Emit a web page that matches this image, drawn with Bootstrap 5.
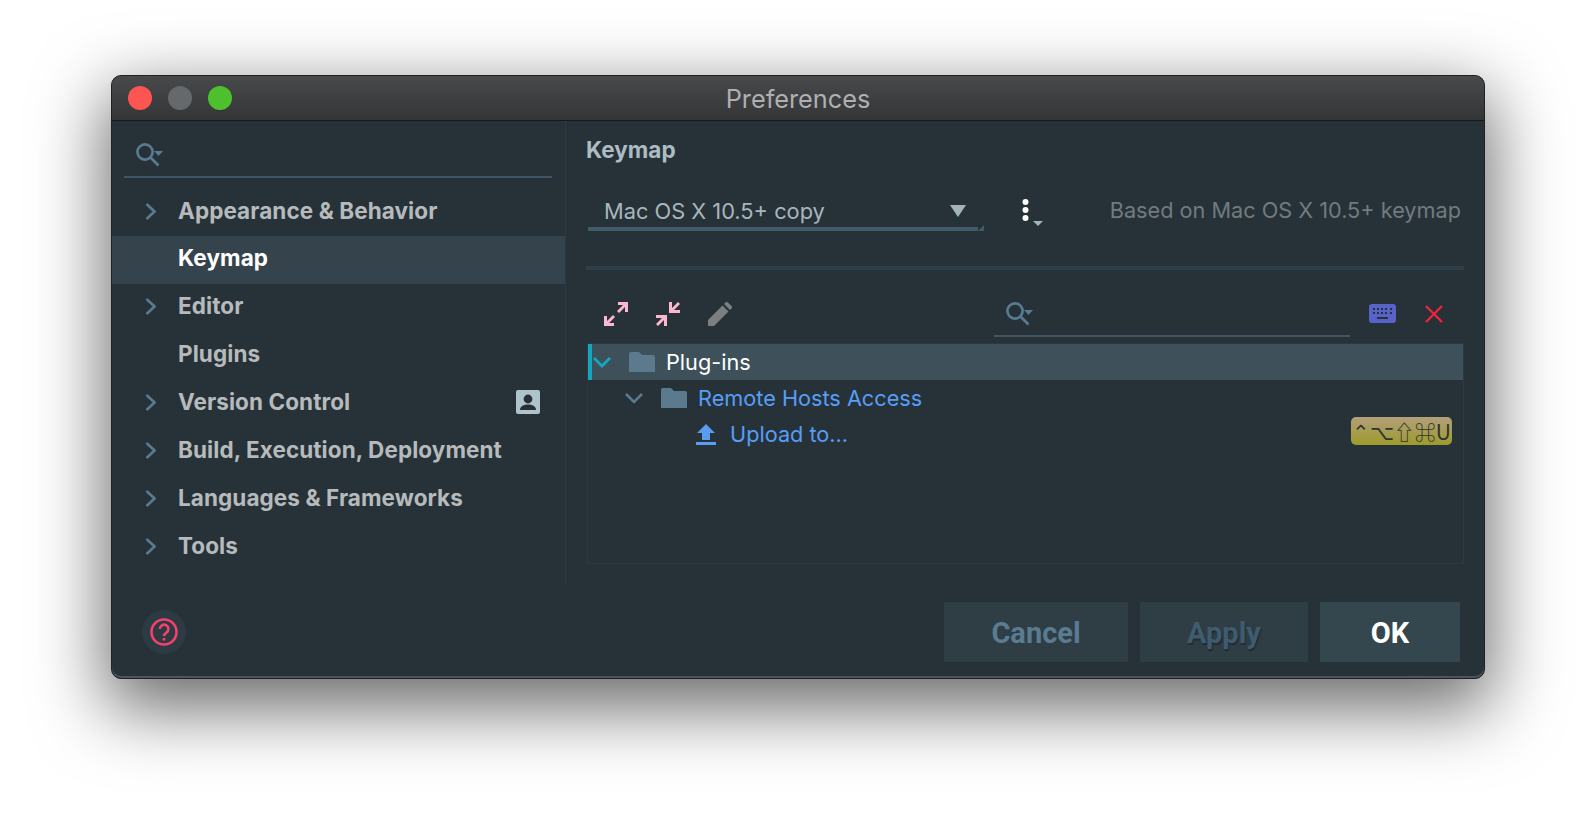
<!DOCTYPE html>
<html lang="en">
<head>
    <meta charset="UTF-8">
    <meta name="viewport" content="width=device-width, initial-scale=1.0">
    <title>Preferences</title>
    <link rel="stylesheet" href="https://cdn.jsdelivr.net/npm/bootstrap@5.3.0/dist/css/bootstrap.min.css">
    <style>
        body { background: #fff; font-family: Inter, "Liberation Sans", sans-serif; overflow: hidden; height: 826px; padding: 75px 0 0 111px; }
        svg { display: block; flex: none; }

        .pref-window { width: 1374px; height: 604px; background: #263238; border-radius: 10px; border: 1px solid #1e2224; box-shadow: inset 0 -2px 0 #4a565c, 0 24px 70px 6px rgba(0,0,0,.58); overflow: hidden; }
        .pref-title { height: 45px; display: grid; grid-template-columns: 1fr auto 1fr; align-items: center; padding: 2px 16px 0; background: linear-gradient(#47494b, #333537); border-bottom: 1px solid #17191a; color: #aeb0b1; font-size: 25.3px; line-height: 1; }
        .pref-lights { gap: 16px; margin-top: -2px; }
        .pref-light { width: 24px; height: 24px; border-radius: 50%; }
        .pref-red { background: #fd5552; }
        .pref-grey { background: #65696b; }
        .pref-green { background: #4ec02d; }

        .pref-side { width: 454px; height: 463px; border-right: 1px solid #2c3943; }
        .pref-search { margin: 0 13px 0 12px; height: 57px; border-bottom: 2px solid #3f5565; padding: 22px 0 0 12px; }
        .pref-nav { margin-top: 11px; background: transparent; border-radius: 0; }
        .pref-nav .list-group-item { height: 48px; padding: 0 25px 4px 33px; background: transparent; border: 0; color: #b6babc; font-size: 22.5px; font-weight: 700; letter-spacing: .08px; gap: 22px; }
        .pref-nav .list-group-item.active { background: #35444c; color: #fff; }
        .pref-gap { width: 11px; flex: none; }

        .pref-main { flex: 1; padding: 0 20px 0 20px; }
        .pref-head { color: #adbbc2; font-size: 22.5px; font-weight: 700; line-height: 58px; height: 60px; }
        .pref-scheme { height: 48px; margin-top: 6px; }
        .pref-combo { width: 390px; height: 44px; margin-left: 2px; padding: 8px 12px 0 16px; border-bottom: 4px solid #425b68; color: #a8b6bc; font-size: 21.8px; }
        .pref-combo::after { content: ""; position: absolute; right: -6px; bottom: -4px; border: 3px solid transparent; border-right-color: #425b68; border-bottom-color: #425b68; }
        .pref-kebab { margin: 9px 0 0 44px; }
        .pref-based { color: #737a7e; font-size: 21.7px; margin: 7px 3px 0 auto; }
        .pref-rule { height: 4px; background: #2f3f49; margin-top: 31px; }
        .pref-tools { height: 74px; padding: 13px 21px 0 18px; }
        .pref-next { margin-left: 28px; }
        .pref-find { width: 356px; height: 67px; margin-top: -13px; padding: 32px 0 0 12px; border-bottom: 2px solid #3f5565; align-self: flex-start; }
        .pref-kbd { margin-left: 19px; }
        .pref-close { margin-left: 29px; }
        .pref-tree { height: 221px; border: 1px solid #2c3943; margin-left: 1px; margin-top: -1px; }
        .pref-row { height: 36px; font-size: 21.7px; color: #589df6; }
        .pref-row.is-open { background: #3e515b; color: #fff; border-left: 4px solid #13a6bd; }
        .pref-arrow-a { margin-left: 1px; }
        .pref-arrow-b { margin-left: 37px; }
        .pref-folder { margin-left: 18px; }
        .pref-label { margin-left: 11px; }
        .pref-upload { margin-left: 108px; }
        .pref-label-up { margin-left: 14px; }
        .pref-keys { height: 28px; padding: 0 1px; margin: -6px 11px 0 auto; background: linear-gradient(#b39f7a, #9d9b2a); border-radius: 5px; color: #2f3336; font-family: "Noto Sans CJK JP", "DejaVu Sans", sans-serif; font-size: 21px; line-height: 28px; white-space: nowrap; }

        .pref-foot { height: 94px; padding: 18px 24px 0 0; }
        .pref-help { width: 44px; height: 44px; margin: 8px 0 0 30px; background: #2c3a43; border-radius: 50%; }
        .pref-btn { height: 60px; padding: 2px 0 0; border: 0; border-radius: 0; background: #2f3d45; font-size: 29px; line-height: 1; font-family: Roboto, sans-serif; font-weight: 700; }
        .pref-cancel { width: 184px; color: #5a7b90; }
        .pref-apply { width: 168px; margin-left: 12px; color: #3f5b70; text-shadow: 1px 2px 1px #222c32; }
        .pref-ok { width: 140px; margin-left: 12px; background: #34474e; color: #fff; }
    </style>
</head>
<body>
    <div class="pref-window d-flex flex-column">
        <div class="pref-title">
            <div class="pref-lights d-flex">
                <div class="pref-light pref-red"></div>
                <div class="pref-light pref-grey"></div>
                <div class="pref-light pref-green"></div>
            </div>
            <div>Preferences</div>
            <div></div>
        </div>

        <div class="d-flex">
            <div class="pref-side">
                <div class="pref-search">
                    <svg width="28" height="24" viewBox="0 0 28 24" fill="none" stroke="#587b90" stroke-width="2.7"><circle cx="9" cy="9" r="7.6"/><path d="M14.500 14.500l8 8"/><path d="M18 8h9l-4.500 5z" fill="#587b90" stroke="none"/></svg>
                </div>
                <div class="pref-nav list-group">
                    <div class="list-group-item d-flex align-items-center"><svg class="pref-gap" width="11" height="17" viewBox="0 0 11 17" fill="none" stroke="#587b90" stroke-width="2.6"><path d="M1.5 1l8 7.5-8 7.5"/></svg>Appearance &amp; Behavior</div>
                    <div class="list-group-item active d-flex align-items-center"><div class="pref-gap"></div>Keymap</div>
                    <div class="list-group-item d-flex align-items-center"><svg class="pref-gap" width="11" height="17" viewBox="0 0 11 17" fill="none" stroke="#587b90" stroke-width="2.6"><path d="M1.5 1l8 7.5-8 7.5"/></svg>Editor</div>
                    <div class="list-group-item d-flex align-items-center"><div class="pref-gap"></div>Plugins</div>
                    <div class="list-group-item d-flex align-items-center"><svg class="pref-gap" width="11" height="17" viewBox="0 0 11 17" fill="none" stroke="#587b90" stroke-width="2.6"><path d="M1.5 1l8 7.5-8 7.5"/></svg>Version Control
                        <svg class="ms-auto" width="24" height="24" viewBox="0 0 24 24"><rect width="24" height="24" rx="2" fill="#afc3cd"/><circle cx="12" cy="9" r="4.4" fill="#263238"/><path d="M4 20c0-4 4-5.5 8-5.5s8 1.500 8 5.500z" fill="#263238"/></svg>
                    </div>
                    <div class="list-group-item d-flex align-items-center"><svg class="pref-gap" width="11" height="17" viewBox="0 0 11 17" fill="none" stroke="#587b90" stroke-width="2.6"><path d="M1.5 1l8 7.5-8 7.5"/></svg>Build, Execution, Deployment</div>
                    <div class="list-group-item d-flex align-items-center"><svg class="pref-gap" width="11" height="17" viewBox="0 0 11 17" fill="none" stroke="#587b90" stroke-width="2.6"><path d="M1.5 1l8 7.5-8 7.5"/></svg>Languages &amp; Frameworks</div>
                    <div class="list-group-item d-flex align-items-center"><svg class="pref-gap" width="11" height="17" viewBox="0 0 11 17" fill="none" stroke="#587b90" stroke-width="2.6"><path d="M1.5 1l8 7.5-8 7.5"/></svg>Tools</div>
                </div>
            </div>

            <div class="pref-main">
                <div class="pref-head">Keymap</div>
                <div class="pref-scheme d-flex align-items-start">
                    <div class="pref-combo position-relative d-flex align-items-center justify-content-between">
                        <span>Mac OS X 10.5+ copy</span>
                        <svg width="16" height="12" viewBox="0 0 16 12"><path d="M0 0h16l-8 12z" fill="#a3b3bb"/></svg>
                    </div>
                    <svg class="pref-kebab" width="22" height="32" viewBox="0 0 22 32"><g fill="#fff"><circle cx="3.500" cy="6" r="3"/><circle cx="3.500" cy="14" r="3"/><circle cx="3.500" cy="22" r="3"/></g><path d="M11 25h10l-5 5z" fill="#a3b3bb"/></svg>
                    <div class="pref-based">Based on Mac OS X 10.5+ keymap</div>
                </div>
                <div class="pref-rule"></div>
                <div class="pref-tools d-flex align-items-center">
                    <svg width="24" height="24" viewBox="0 0 24 24" fill="#fbb8d0"><path d="M14 0h10v10h-3V5l-6 6-2-2 6-6h-5z"/><path d="M10 24H0V14h3v5l6-6 2 2-6 6h5z"/></svg>
                    <svg class="pref-next" width="24" height="24" viewBox="0 0 24 24" fill="#fbb8d0"><path d="M24 8v3H13V0h3v6l6-6 2 2-6 6z"/><path d="M0 16v-3h11v11H8v-6l-6 6-2-2 6-6z"/></svg>
                    <svg class="pref-next" width="24" height="24" viewBox="0 0 24 24" fill="#7b7f81"><path d="M0 24v-6L14.500 3.500l6 6L6 24z"/><path d="M16 2l1.500-1.500a1.700 1.700 0 0 1 2.400 0l3.600 3.600a1.700 1.700 0 0 1 0 2.400L22 8z"/></svg>
                    <div class="pref-find ms-auto">
                        <svg width="28" height="24" viewBox="0 0 28 24" fill="none" stroke="#587b90" stroke-width="2.7"><circle cx="9" cy="9" r="7.6"/><path d="M14.500 14.500l8 8"/><path d="M18 8h9l-4.500 5z" fill="#587b90" stroke="none"/></svg>
                    </div>
                    <svg class="pref-kbd" width="27" height="19" viewBox="0 0 27 19"><rect width="27" height="19" rx="3" fill="#5763c8"/><g fill="#263238"><path d="M4 4h2v2H4zM8 4h2v2H8zM12 4h2v2h-2zM16 4h2v2h-2zM21 4h2v2h-2zM4 8h2v2H4zM8 8h2v2H8zM12 8h2v2h-2zM16 8h2v2h-2zM21 8h2v2h-2zM8 13h11v2H8z"/></g></svg>
                    <svg class="pref-close" width="18" height="18" viewBox="0 0 18 18" fill="none" stroke="#f2223f" stroke-width="2.400"><path d="M1 1l16 16M17 1L1 17"/></svg>
                </div>
                <div class="pref-tree">
                    <div class="pref-row is-open d-flex align-items-center">
                        <svg class="pref-arrow-a" width="18" height="11" viewBox="0 0 18 11" fill="none" stroke="#13a6bd" stroke-width="2.800"><path d="M1 1l8 8 8-8"/></svg>
                        <svg class="pref-folder" width="26" height="20" viewBox="0 0 26 20"><path d="M0 2a2 2 0 0 1 2-2h8l3 3h11a2 2 0 0 1 2 2v15H0z" fill="#5c7a8e"/></svg>
                        <span class="pref-label">Plug-ins</span>
                    </div>
                    <div class="pref-row d-flex align-items-center">
                        <svg class="pref-arrow-b" width="18" height="11" viewBox="0 0 18 11" fill="none" stroke="#587b90" stroke-width="2.600"><path d="M1 1l8 8 8-8"/></svg>
                        <svg class="pref-folder" width="26" height="20" viewBox="0 0 26 20"><path d="M0 2a2 2 0 0 1 2-2h8l3 3h11a2 2 0 0 1 2 2v15H0z" fill="#5c7a8e"/></svg>
                        <span class="pref-label">Remote Hosts Access</span>
                    </div>
                    <div class="pref-row d-flex align-items-center">
                        <svg class="pref-upload" width="20" height="21" viewBox="0 0 20 21"><path d="M10 0l9 9h-5v7H6V9H1zM0 18h20v3H0z" fill="#5a9cf0"/></svg>
                        <span class="pref-label-up">Upload to...</span>
                        <div class="pref-keys">⌃⌥⇧⌘U</div>
                    </div>
                </div>
            </div>
        </div>

        <div class="pref-foot d-flex align-items-start">
            <div class="pref-help d-flex align-items-center justify-content-center me-auto">
                <svg width="28" height="28" viewBox="0 0 28 28" fill="none" stroke="#f8406c" stroke-width="2.600"><circle cx="14" cy="14" r="12.500"/><path d="M9.800 11a4.300 4.300 0 1 1 6.600 3.600c-1.500 1-2.400 1.700-2.400 3.400"/><path d="M14 20v2.500"/></svg>
            </div>
            <button type="button" class="btn pref-btn pref-cancel">Cancel</button>
            <button type="button" class="btn pref-btn pref-apply">Apply</button>
            <button type="button" class="btn pref-btn pref-ok">OK</button>
        </div>
    </div>
    <script src="https://cdn.jsdelivr.net/npm/bootstrap@5.3.0/dist/js/bootstrap.bundle.min.js"></script>
</body>
</html>
